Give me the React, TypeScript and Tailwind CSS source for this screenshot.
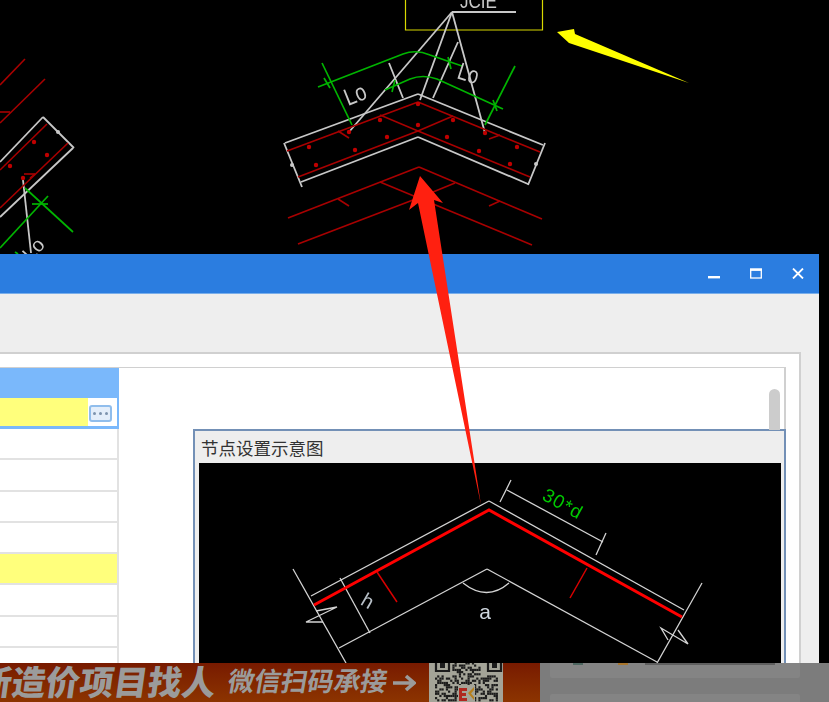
import React from 'react';

type Line = [number, number, number, number];

const RED = '#a80000';
const WHITE = '#c8c8c8';
const GREEN = '#00b400';

const redLines: Line[] = [
  // roof slab rebar
  [287, 151, 418, 102], [418, 102, 540, 152],
  [298, 177, 418, 131], [418, 131, 530, 177],
  [380, 115, 418, 131], [418, 131, 453, 116],
  [338, 131, 349, 138], [489, 139, 500, 135],
  // lower copy
  [288, 218, 419, 167], [419, 167, 542, 219],
  [298, 244, 413, 200], [380, 182, 532, 245],
  [433, 192, 455, 183], [338, 199, 349, 206], [489, 206, 500, 201],
  // left fragment
  [25, 59, 0, 85], [45, 79, 0, 123], [0, 112, 10, 112],
  [47, 124, 0, 170], [68, 143, 0, 208], [24, 174, 35, 174], [35, 174, 30, 178],
];

const whiteLines: Line[] = [
  [285, 143, 418, 94], [418, 94, 543, 145],
  [301, 182, 418, 137], [418, 137, 528, 184],
  [284, 143, 302, 187], [545, 143, 528, 185],
  [452, 12, 349, 132], [452, 12, 420, 100], [458, 42, 433, 98], [452, 12, 485, 133],
  [452, 12, 516, 12], [389, 63, 403, 98],
  [43, 117, 0, 162], [43, 117, 74, 148], [73, 148, 0, 217], [23, 180, 31, 253],
];

const greenLines: Line[] = [
  [322, 63, 352, 125], [515, 66, 485, 125],
  [324, 78, 330, 88], [395, 80, 392, 92], [448, 57, 451, 69], [493, 100, 497, 111],
  [25, 188, 73, 232], [48, 196, 0, 248], [32, 204, 48, 204], [15, 252, 18, 254],
];

const redDots: [number, number][] = [
  [309, 147], [355, 150], [316, 165], [380, 120], [387, 137], [418, 125], [418, 104],
  [453, 120], [447, 137], [479, 151], [510, 164], [517, 147], [349, 132], [485, 133],
  [34, 142], [47, 155], [10, 166], [23, 178],
];

const diagramWhite: Line[] = [
  [311, 596, 489, 501], [489, 501, 684, 610],
  [339, 648, 487, 569], [487, 569, 657, 662],
  [293, 569, 346, 663], [702, 583, 657, 663],
  [340, 578, 370, 633], [507, 490, 603, 542],
  [511, 480, 500, 502], [606, 533, 596, 555],
];

const qrCells = (() => {
  const cells: [number, number][] = [];
  let seed = 17;
  for (let row = 0; row < 20; row++) {
    for (let col = 0; col < 29; col++) {
      seed = (seed * 73 + 41) % 1009;
      const inFinder = row < 8 && (col < 8 || col > 20);
      if (!inFinder && seed % 100 < 50) cells.push([col, row]);
    }
  }
  return cells;
})();

const Lines = ({ items, color, width = 1.8 }: { items: Line[]; color: string; width?: number }) => (
  <>
    {items.map(([x1, y1, x2, y2], i) => (
      <line key={i} x1={x1} y1={y1} x2={x2} y2={y2} stroke={color} strokeWidth={width} />
    ))}
  </>
);

const CadTop = () => (
  <svg viewBox="0 0 829 254" className="block h-[254px] w-[829px] blur-[0.5px]">
    <path d="M405.5 0V30H542.5V0" fill="none" stroke="#d8d800" strokeWidth="1.2" />
    <text x="460" y="8" fontSize="20" fill={WHITE} fontFamily="Liberation Sans" textLength="37" lengthAdjust="spacingAndGlyphs">JCIE</text>
    <Lines items={whiteLines} color={WHITE} />
    <Lines items={redLines} color={RED} width={1.6} />
    <Lines items={greenLines} color={GREEN} width={1.7} />
    <path d="M318 87L403 54Q416 49 430 55L462 66" fill="none" stroke={GREEN} strokeWidth="1.7" />
    <path d="M385 90L410 79Q423 74 437 79L503 109" fill="none" stroke={GREEN} strokeWidth="1.7" />
    {redDots.map(([cx, cy], i) => (
      <circle key={i} cx={cx} cy={cy} r="2.2" fill="#c00000" />
    ))}
    <text x="348" y="106" fontSize="24" fill={WHITE} fontFamily="Liberation Sans" transform="rotate(-22 348 106)" textLength="22" lengthAdjust="spacingAndGlyphs">Lo</text>
    <text x="456" y="78" fontSize="24" fill={WHITE} fontFamily="Liberation Sans" transform="rotate(18 456 78)" textLength="21" lengthAdjust="spacingAndGlyphs">Lo</text>
    <text x="31" y="262" fontSize="20" fill={WHITE} fontFamily="Liberation Sans" transform="rotate(-48 31 262)">Lo</text>
    <circle cx="292" cy="165" r="2" fill={WHITE} />
    <circle cx="536" cy="164" r="2" fill={WHITE} />
    <circle cx="58" cy="132" r="2" fill={WHITE} />
  </svg>
);

const Diagram = () => (
  <svg viewBox="199 463 582 200" className="block h-[200px] w-[582px] blur-[0.3px]">
    <Lines items={diagramWhite} color="#d4d4d4" width={1.3} />
    <path d="M314 605L489 510L682 617" fill="none" stroke="#ff0000" strokeWidth="3" />
    <path d="M377 572L397 602M587 568L570 598" fill="none" stroke="#d80000" strokeWidth="1.5" />
    <path d="M463 583Q487 602 509 583" fill="none" stroke="#d4d4d4" strokeWidth="1.3" />
    <path d="M316 611L337 607L306 622L323 622" fill="none" stroke="#d4d4d4" strokeWidth="1.3" />
    <path d="M668 640L661 628L688 644L678 630" fill="none" stroke="#d4d4d4" strokeWidth="1.3" />
    <text x="485" y="619" fontSize="21" textAnchor="middle" fill="#d0d8e0" fontFamily="Liberation Sans">a</text>
    <text x="0" y="0" fontSize="20" fill="#b8c0c8" fontFamily="Liberation Sans" transform="translate(359.5 604) rotate(30)">h</text>
    <text x="0" y="0" fontSize="19" fill="#00c800" fontFamily="Liberation Sans" transform="translate(541 499) rotate(29)" textLength="42" lengthAdjust="spacing">30*d</text>
  </svg>
);

const Arrows = () => (
  <svg viewBox="0 0 829 702" className="absolute inset-0 h-[702px] w-[829px]">
    <path d="M420 176L443 203L434 200L481 505L418 203L409 210Z" fill="#ff2010" />
    <path d="M557 32L574 29L575 34L689 83L569 43Z" fill="#ffff00" />
  </svg>
);

const WindowButtons = () => (
  <div className="flex items-center gap-[30px]">
    <svg width="12" height="11" viewBox="0 0 12 11">
      <rect x="0" y="8" width="12" height="2.4" fill="#fff" />
    </svg>
    <svg width="12" height="11" viewBox="0 0 12 11">
      <rect x="0.7" y="1.2" width="10.6" height="8.8" fill="none" stroke="#fff" strokeWidth="1.3" />
      <rect x="0" y="0.5" width="12" height="2.4" fill="#fff" />
    </svg>
    <svg width="12" height="11" viewBox="0 0 12 11">
      <path d="M1 0.5L11 10.5M11 0.5L1 10.5" stroke="#fff" strokeWidth="1.8" fill="none" />
    </svg>
  </div>
);

const PropertyTable = () => (
  <div className="w-[119px] shrink-0 border-r-2 border-[#e2e2e2]">
    <div className="-mr-[2px] h-[30px] bg-[#7ab8fb]" />
    <div className="-mr-[2px] flex h-[31px] border-r-2 border-b-[3px] border-[#7ab8fb] bg-white">
      <div className="w-[88px] bg-[#ffff7c]" />
      <div className="ml-[1px] mt-[7px] flex h-[17px] w-[23px] items-center justify-center gap-[3px] rounded-[3px] border-2 border-[#90bdec] bg-[#e4eefa]">
        <span className="h-[3px] w-[3px] rounded-full bg-[#7d93ad]" />
        <span className="h-[3px] w-[3px] rounded-full bg-[#7d93ad]" />
        <span className="h-[3px] w-[3px] rounded-full bg-[#7d93ad]" />
      </div>
    </div>
    <div className="h-[31.3px] border-b-2 border-[#e2e2e2]" />
    <div className="h-[31.3px] border-b-2 border-[#e2e2e2]" />
    <div className="h-[31.3px] border-b-2 border-[#e2e2e2]" />
    <div className="h-[31.3px] border-b-2 border-[#e2e2e2]" />
    <div className="h-[31.3px] border-b-2 border-[#e2e2e2] bg-[#ffff7c]" />
    <div className="h-[31.3px] border-b-2 border-[#e2e2e2]" />
    <div className="h-[31.3px] border-b-2 border-[#e2e2e2]" />
  </div>
);

const Banner = () => (
  <div className="flex w-[540px] shrink-0 items-center overflow-hidden bg-gradient-to-b from-[#781a00] to-[#8c3400] text-[#9b9b9b]">
    <span className="-ml-[22px] shrink-0 -skew-x-[8deg] text-[34px] leading-none font-black">新造价项目找人</span>
    <span className="ml-[12px] shrink-0 -skew-x-[10deg] text-[26.5px] leading-none font-bold">微信扫码承接</span>
    <svg width="23" height="18" viewBox="0 0 23 18" className="ml-[6px] shrink-0">
      <path d="M0 9H20M13 2L21 9L13 16" fill="none" stroke="#9b9b9b" strokeWidth="3.6" />
    </svg>
    <svg viewBox="429 663 74 39" className="ml-[13px] h-[39px] w-[74px] shrink-0 bg-[#a4a498] blur-[0.4px]">
      <path d="M436 658h13v13h-13zM488 658h13v13h-13z" fill="none" stroke="#1c1c1c" strokeWidth="2.2" />
      <rect x="440" y="662" width="5" height="6" fill="#1c1c1c" />
      <rect x="492" y="662" width="5" height="6" fill="#1c1c1c" />
      {qrCells.map(([col, row], i) => (
        <rect key={i} x={435 + col * 2.17} y={658 + row * 2.17} width="2.17" height="2.17" fill="#1c1c1c" />
      ))}
      <rect x="458" y="685" width="17" height="17" fill="#a4a498" />
      <path d="M459 688h8v3h-5v2h4v3h-4v2h5v3h-8z" fill="#b02820" />
      <path d="M468 693l6-6v3l-3 3.5 3 3.5v3z" fill="#b8801c" />
    </svg>
  </div>
);

const SideAds = () => (
  <div className="flex flex-1 flex-col gap-[16px] bg-[#7c7c7c] pr-[29px] pl-[10px]">
    <div className="flex h-[15px] items-start rounded-b-[2px] bg-[#848484]">
      <div className="ml-[23px] h-[2px] w-[10px] bg-[#4d6660]" />
      <div className="ml-[35px] h-[2px] w-[10px] bg-[#a8752c]" />
      <div className="ml-[17px] h-[2px] w-[130px] bg-[#5f5f5f]" />
    </div>
    <div className="h-[8px] rounded-t-[2px] bg-[#848484]" />
  </div>
);

export default function App() {
  return (
    <div className="relative flex h-[702px] w-[829px] flex-col overflow-hidden bg-black font-['Liberation_Sans','Noto_Sans_CJK_SC',sans-serif]">
      <CadTop />

      <div className="flex h-[409px] w-[819px] flex-col bg-[#eeeeee]">
        <div className="flex h-[40px] shrink-0 items-center justify-end border-b border-[#79aeea] bg-[#2b7de0] pr-[15px]">
          <WindowButtons />
        </div>
        <div className="flex min-h-0 flex-1 flex-col pt-[58px] pr-[18px]">
          <div className="flex min-h-0 flex-1 flex-col border-t-2 border-r-2 border-[#d0d0d0] bg-white pt-[13px] pr-[13px]">
            <div className="relative flex min-h-0 flex-1 border-t border-r-2 border-[#d0d0d0]">
              <PropertyTable />
              <div className="flex min-w-0 flex-1 flex-col pt-[61px] pl-[74px]">
                <div className="-mr-[2px] flex min-h-0 flex-1 flex-col border-x-2 border-t-2 border-[#7390b6] bg-[#eeeeee] pr-[3px] pl-[4px]">
                  <div className="flex h-[32px] shrink-0 items-center pt-[5px] pl-[2px] text-[17.5px] leading-none text-[#333333]">节点设置示意图</div>
                  <div className="min-h-0 flex-1 overflow-hidden bg-black">
                    <Diagram />
                  </div>
                </div>
              </div>
              <div className="absolute top-[21px] right-[4px] h-[41px] w-[11px] rounded-t-full bg-[#cccccc]" />
            </div>
          </div>
        </div>
      </div>

      <div className="flex h-[39px] w-[829px]">
        <Banner />
        <SideAds />
      </div>

      <Arrows />
    </div>
  );
}
